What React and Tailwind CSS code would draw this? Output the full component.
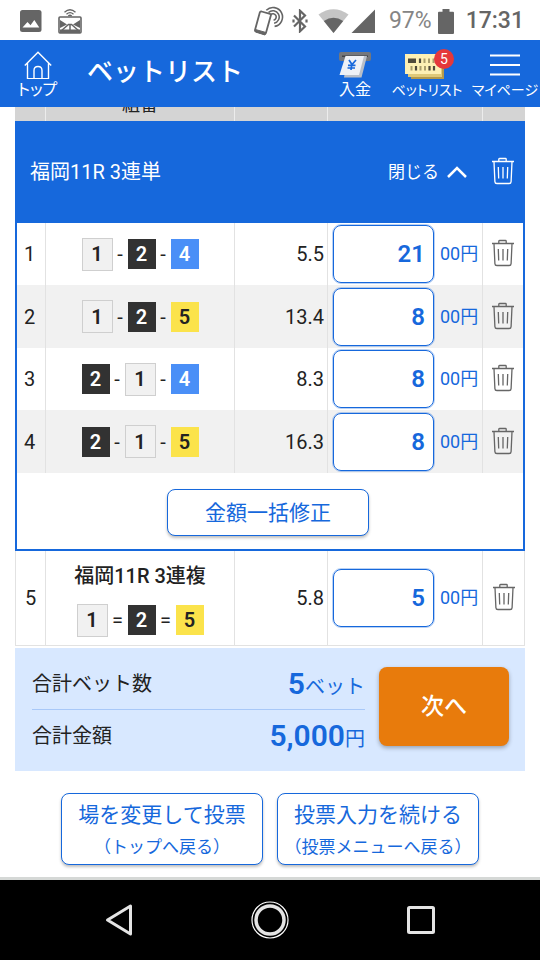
import React from 'react'

const boatColors = {
    1: 'h-[33px] w-[31px] border border-[#cfcfcf] bg-[#f1f1f1] text-[#222]',
    2: 'h-[30px] w-7 bg-[#323232] text-white',
    4: 'h-[30px] w-7 bg-[#4a8ff7] text-white',
    5: 'h-[30px] w-7 bg-[#fbe34b] text-[#222]',
}

const bets = [
    { id: 1, boats: [1, 2, 4], odds: '5.5', amount: '21' },
    { id: 2, boats: [1, 2, 5], odds: '13.4', amount: '8' },
    { id: 3, boats: [2, 1, 4], odds: '8.3', amount: '8' },
    { id: 4, boats: [2, 1, 5], odds: '16.3', amount: '8' },
]

function TrashIcon() {
    return (
        <svg className="h-7 w-6" viewBox="0 0 24 28" fill="none" stroke="currentColor" strokeWidth="1.3">
            <path d="M1 4.5h22M7.8 4.2V2.2q0-.7.7-.7h6q.7 0 .7.7v2M3 4.8l.9 19.8q.1 1.9 2 1.9h12.2q1.9 0 2-1.9L21 4.8" />
            <path d="M7.3 10l.4 11.5M12 10v11.5M16.7 10l-.4 11.5" />
        </svg>
    )
}

function StatusBar() {
    return (
        <div className="flex h-10 items-center bg-white pt-0.5 pr-4 pl-5 font-['Roboto',sans-serif] text-[23px] text-[#656565]">
            <svg className="h-[22px] w-[22px]" viewBox="0 0 22 22">
                <rect x="0" y="0" width="21.5" height="22" rx="2.5" fill="#656565" />
                <path d="M2.5 17.5l5-5.5 3 3.2 3.8-5.2 5 7.5z" fill="#fff" />
            </svg>
            <svg className="ml-4 h-[26px] w-6" viewBox="0 0 24 26" fill="none" stroke="#656565">
                <path d="M6.5 4.2Q12-.8 17.5 4.2M8.5 6.2Q12 3 15.5 6.2M10.3 8Q12 6.4 13.7 8" strokeWidth="1.3" />
                <rect x="1" y="9" width="22" height="16" rx="1" strokeWidth="1.6" />
                <path d="M2 12l7 4.5-7 3.5zM22 12l-7 4.5 7 3.5zM2 21.5h20V25H2z" fill="#656565" stroke="none" />
                <path d="M3 23L10.5 16.5h3L21 23M12 17v7" strokeWidth="1.5" />
            </svg>
            <div className="ml-auto flex items-center">
                <svg className="h-[30px] w-[30px]" viewBox="0 0 30 30" fill="none" stroke="#656565">
                    <path d="M12.3 4.3A9.5 9.5 0 1 1 20.6 20.4M14.5 6.5A6.3 6.3 0 1 1 20.1 17.2M16.7 8.7A3.2 3.2 0 1 1 19.6 14.1" strokeWidth="1.6" />
                    <path d="M7.5 5.5L16 7.8q1.2.4.9 1.5L12 26.8q-.4 1.3-1.6 1L2 25.5q-1.3-.4-1-1.5L5.8 6.5q.4-1.3 1.7-1z" fill="#fff" strokeWidth="1.8" />
                    <path d="M1.5 23.5l10.5 3-1 2.5-9.5-3z" fill="#656565" />
                </svg>
                <svg className="ml-2 h-6 w-4" viewBox="0 0 16 24" fill="none" stroke="#656565" strokeWidth="2.2">
                    <path d="M2 6.5l11 11L8 22.3V1.7l5 4.8-11 11" />
                    <path d="M1.5 10.5v3M14.5 10.5v3" />
                </svg>
                <svg className="ml-2.5 h-6 w-[31px]" viewBox="0 0 31 24">
                    <path d="M.5 5.5Q15.5-5 30.5 5.5L15.5 24z" fill="#c4c4c4" />
                    <path d="M5.8 12Q15.5 5.500 25.2 12L15.5 24z" fill="#656565" />
                </svg>
                <svg className="ml-0.5 h-6 w-6" viewBox="0 0 24 24">
                    <path d="M24 .5V24H.5z" fill="#656565" />
                </svg>
                <span className="ml-3.5 text-[#858585]">97%</span>
                <svg className="ml-1.5 h-[25px] w-4" viewBox="0 0 16 25">
                    <path d="M4.5 0h7v2.7H15q1 0 1 1V24q0 1-1 1H1q-1 0-1-1V3.700q0-1 1-1h3.5z" fill="#656565" />
                </svg>
                <span className="ml-3 font-medium">17:31</span>
            </div>
        </div>
    )
}

function Header() {
    return (
        <header className="relative z-10 flex h-[67px] items-start bg-[#1668dc] pt-[11px] text-white">
            <a href="#top" className="flex w-[71px] flex-col items-center gap-px pl-1">
                <svg className="h-7 w-7" viewBox="0 0 28 28" fill="none" stroke="#fff" strokeWidth="1.4">
                    <path d="M.8 14.5L14 1.2l13.2 13.3M3.5 12v15.7h21V12" />
                    <path d="M10 27.5v-8q0-4 4-4t4 4v8" />
                </svg>
                <span className="text-base leading-5 [font-feature-settings:'palt']">トップ</span>
            </a>
            <h1 className="ml-4 text-[26px] leading-[42px] font-medium">ベットリスト</h1>
            <nav className="ml-auto flex text-sm leading-5 whitespace-nowrap [font-feature-settings:'palt']">
                <a href="#deposit" className="flex w-[58px] flex-col items-center gap-px">
                    <svg className="h-7 w-[34px]" viewBox="0 0 34 28">
                        <rect x="1" y="1" width="32" height="9" rx="2" fill="#74777c" />
                        <path d="M4 4.5h26V6H4z" fill="#3f4247" />
                        <path d="M10 5h19l-5.5 21.5H6z" fill="#b9bfc8" />
                        <path d="M7.5 5H26l-5 19H1.5z" fill="#eef1f6" />
                        <path d="M11 9l3 4.5L18 9M13.8 13.5L13 19M10 14.3h7.5M9.5 17h7.5" fill="none" stroke="#1668dc" strokeWidth="1.7" />
                    </svg>
                    <span className="text-base leading-5">入金</span>
                </a>
                <a href="#bets" className="relative flex w-[86px] flex-col items-center gap-px">
                    <svg className="h-7 w-[46px]" viewBox="0 0 46 28">
                        <path d="M7 8h33v20H7z" fill="#b39a4c" />
                        <path d="M4 6h34v20H4z" fill="#dfc978" />
                        <path d="M1 3h36v20H1z" fill="#fdf0b4" />
                        <path d="M4 7.5h8V12H4z" fill="#4f4a3b" />
                        <path d="M16 7.5v4.5M30 15v4.5M25.5 15v4.5M12 15v4.5" stroke="#4f4a3b" strokeWidth="2.2" />
                        <path d="M20.5 7.5v4.5M25 7.5v4.5M29.5 7.5v4.5M7.5 15v4.5M16.5 15v4.5M21 15v4.5" stroke="#aa9d6c" strokeWidth="2" />
                    </svg>
                    <span>ベットリスト</span>
                    <span className="absolute -top-0.5 right-4 flex h-5 w-5 items-center justify-center rounded-full bg-[#e5383b]">5</span>
                </a>
                <a href="#mypage" className="flex w-[70px] flex-col items-center gap-px">
                    <svg className="h-7 w-[30px]" viewBox="0 0 30 28" stroke="#fff" strokeWidth="2">
                        <path d="M0 4.5h30M0 14h30M0 23.5h30" />
                    </svg>
                    <span>マイページ</span>
                </a>
            </nav>
        </header>
    )
}

function Combination({ boats, separator }) {
    return (
        <div className="flex items-center justify-center">
            {boats.map((boat, i) => (
                <React.Fragment key={boat}>
                    {i > 0 && <span className={separator === '=' ? 'w-5 text-center' : 'w-[15px] text-center'}>{separator}</span>}
                    <span className={`flex items-center justify-center font-semibold ${boatColors[boat]}`}>{boat}</span>
                </React.Fragment>
            ))}
        </div>
    )
}

function AmountField({ id, amount }) {
    return (
        <label className="flex items-center gap-1.5 pl-[5px] text-[#1668dc]">
            <input
                type="text"
                inputMode="numeric"
                aria-label={`${id}の金額`}
                defaultValue={amount}
                className="h-[58px] w-[101px] rounded-lg border border-[#1668dc] bg-white px-2 text-right text-2xl font-semibold outline outline-[#1668dc]/30"
            />
            <span className="text-lg leading-6 whitespace-nowrap">00円</span>
        </label>
    )
}

function DeleteButton({ id }) {
    return (
        <button type="button" aria-label={`${id}を削除`} className="mx-auto mb-0.5 block">
            <TrashIcon />
        </button>
    )
}

function BetTable() {
    return (
        <table className="-mt-8 w-full table-fixed border-separate border-spacing-0">
            <colgroup>
                <col className="w-[31px]" />
                <col />
                <col className="w-[93px]" />
                <col className="w-[155px]" />
                <col className="w-[42px]" />
            </colgroup>
            <thead className="bg-[#d4d4d4] text-lg leading-6">
                <tr className="h-[46px]">
                    <th className="border-r border-[#ececec]"></th>
                    <th className="border-r border-[#ececec] pb-1 align-bottom font-normal">組番</th>
                    <th className="border-r border-[#ececec]"></th>
                    <th className="border-r border-[#ececec]"></th>
                    <th></th>
                </tr>
            </thead>
            <tbody>
                <tr className="h-[102px] bg-[#1668dc] text-white">
                    <th colSpan={3} className="pl-[15px] text-left font-normal">福岡11R 3連単</th>
                    <td>
                        <button type="button" className="ml-auto flex items-center gap-2 pr-4 text-[17px]">
                            閉じる
                            <svg className="h-3 w-5" viewBox="0 0 20 12" fill="none" stroke="#fff" strokeWidth="2.5">
                                <path d="M1 11l9-9 9 9" />
                            </svg>
                        </button>
                    </td>
                    <td className="border-r-2 border-[#1668dc]"><DeleteButton id="福岡11R 3連単" /></td>
                </tr>
                {bets.map((bet) => (
                    <tr key={bet.id} className="even:h-[62px] even:bg-white odd:h-[63px] odd:bg-[#f1f1f1]">
                        <td className="border-r border-l-2 border-r-[#e2e2e2] border-l-[#1668dc] pr-[3px] text-center">{bet.id}</td>
                        <td className="border-r border-[#e2e2e2]"><Combination boats={bet.boats} separator="-" /></td>
                        <td className="border-r border-[#e2e2e2] pr-[3px] text-right">{bet.odds}</td>
                        <td className="border-r border-[#e2e2e2]"><AmountField id={bet.id} amount={bet.amount} /></td>
                        <td className="border-r-2 border-r-[#1668dc] text-[#666]"><DeleteButton id={bet.id} /></td>
                    </tr>
                ))}
                <tr className="h-[78px]">
                    <td colSpan={5} className="border-x-2 border-b-2 border-[#1668dc] pt-[3px] pr-1">
                        <button type="button" className="mx-auto block h-[47px] w-[202px] rounded-lg border border-[#1668dc] bg-white text-[21px] text-[#1668dc] shadow-[0_2px_3px_rgba(0,0,0,0.25)]">
                            金額一括修正
                        </button>
                    </td>
                </tr>
                <tr className="h-[95px]">
                    <td className="border-x border-b border-[#e2e2e2] text-center">5</td>
                    <td className="border-r border-b border-[#e2e2e2] pt-1">
                        <p className="mb-4 text-center font-medium">福岡11R 3連複</p>
                        <Combination boats={[1, 2, 5]} separator="=" />
                    </td>
                    <td className="border-r border-b border-[#e2e2e2] pr-[3px] text-right">5.8</td>
                    <td className="border-r border-b border-[#e2e2e2]"><AmountField id={5} amount="5" /></td>
                    <td className="border-r border-b border-[#e2e2e2] text-[#666]"><DeleteButton id={5} /></td>
                </tr>
            </tbody>
        </table>
    )
}

function Summary() {
    return (
        <section className="mt-0.5 flex items-start gap-3.5 bg-[#d8e8ff] pt-[19px] pr-4 pb-[17px] pl-[17px]">
            <dl className="flex-1">
                <div className="flex h-[43px] items-center justify-between border-b border-[#a8c8f8] pb-2">
                    <dt>合計ベット数</dt>
                    <dd className="text-[#1668dc]"><span className="text-3xl font-semibold">5</span>ベット</dd>
                </div>
                <div className="flex h-11 items-center justify-between pt-2">
                    <dt>合計金額</dt>
                    <dd className="text-[#1668dc]"><span className="text-3xl font-semibold">5,000</span>円</dd>
                </div>
            </dl>
            <button type="button" className="h-[79px] w-[130px] rounded-lg bg-[#e87b0c] text-[23px] font-medium text-white shadow-[0_2px_4px_rgba(0,0,0,0.3)]">次へ</button>
        </section>
    )
}

function BackButton({ title, note }) {
    return (
        <button type="button" className="flex h-[72px] w-[202px] flex-col items-center justify-center gap-2 rounded-lg border border-[#1668dc] bg-white pt-1 whitespace-nowrap text-[#1668dc] shadow-[0_2px_3px_rgba(0,0,0,0.25)]">
            <span className="text-[21px] leading-6">{title}</span>
            <span className="text-[17px] leading-6">{note}</span>
        </button>
    )
}

function NavigationBar() {
    return (
        <nav className="flex h-[83px] items-center justify-center gap-[111px] border-t-[3px] border-[#d5d8d6] bg-black">
            <button type="button" aria-label="戻る">
                <svg className="h-10 w-10" viewBox="0 0 40 40" fill="none" stroke="#e4e4e4" strokeWidth="3" strokeLinejoin="round">
                    <path d="M31.5 6v28L8.5 20z" />
                </svg>
            </button>
            <button type="button" aria-label="ホーム">
                <svg className="h-10 w-10" viewBox="0 0 40 40" fill="none" stroke="#e4e4e4">
                    <circle cx="20" cy="20" r="18" strokeWidth="1.2" stroke="#fff" />
                    <circle cx="20" cy="20" r="14" strokeWidth="3.5" />
                </svg>
            </button>
            <button type="button" aria-label="履歴">
                <svg className="h-10 w-10" viewBox="0 0 40 40" fill="none" stroke="#e4e4e4" strokeWidth="3">
                    <rect x="7.5" y="7.5" width="25" height="25" rx="1" />
                </svg>
            </button>
        </nav>
    )
}

export default function App() {
    return (
        <div className="flex min-h-screen flex-col bg-white font-['Roboto','Noto_Sans_CJK_JP',sans-serif] text-xl leading-6 text-[#222]">
            <StatusBar />
            <Header />
            <main className="flex-1 px-[15px]">
                <BetTable />
                <Summary />
                <div className="flex justify-center gap-3.5 pt-[22px] pb-3">
                    <BackButton title="場を変更して投票" note="（トップへ戻る）" />
                    <BackButton title="投票入力を続ける" note="（投票メニューへ戻る）" />
                </div>
            </main>
            <NavigationBar />
        </div>
    )
}
